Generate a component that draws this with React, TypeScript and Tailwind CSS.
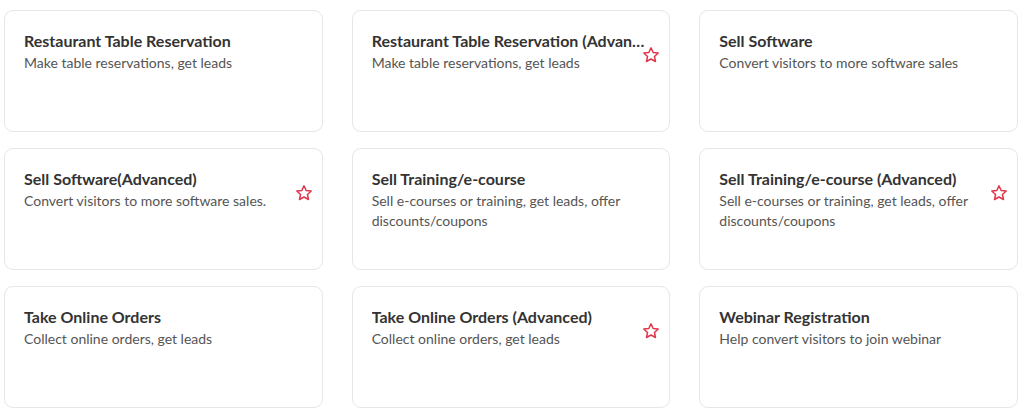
import React from "react";

type Item = { title: string; desc: string; star?: boolean };

const items: Item[] = [
  { title: "Restaurant Table Reservation", desc: "Make table reservations, get leads" },
  { title: "Restaurant Table Reservation (Advanced)", desc: "Make table reservations, get leads", star: true },
  { title: "Sell Software", desc: "Convert visitors to more software sales" },
  { title: "Sell Software(Advanced)", desc: "Convert visitors to more software sales.", star: true },
  { title: "Sell Training/e-course", desc: "Sell e-courses or training, get leads, offer discounts/coupons" },
  { title: "Sell Training/e-course (Advanced)", desc: "Sell e-courses or training, get leads, offer discounts/coupons", star: true },
  { title: "Take Online Orders", desc: "Collect online orders, get leads" },
  { title: "Take Online Orders (Advanced)", desc: "Collect online orders, get leads", star: true },
  { title: "Webinar Registration", desc: "Help convert visitors to join webinar" },
];

function StarIcon() {
  return (
    <svg width="18" height="18" viewBox="0 0 24 24" fill="none" stroke="#e0364a" strokeWidth="2" strokeLinejoin="round">
      <polygon points="12,2.5 14.9,8.7 21.6,9.4 16.6,14 18,20.7 12,17.3 6,20.7 7.4,14 2.4,9.4 9.1,8.7" />
    </svg>
  );
}

export default function App() {
  return (
    <div className="w-[1024px] h-[415px] bg-white pt-[10px] pl-[4px]" style={{ fontFamily: 'Lato, "Open Sans", sans-serif' }}>
      <div className="grid w-[1014px] grid-cols-3 gap-x-[29px] gap-y-[16px]">
        {items.map((it, i) => (
          <div key={i} className="relative h-[122px] rounded-[9px] border border-[#e6e6e6] bg-white pl-[19px] pr-[22px] pt-[19px]">
            <div className="truncate text-[16px] font-bold leading-[22px] text-[#333333]">{it.title}</div>
            <div className="mt-[1px] text-[14px] leading-[20px] text-[#555555]">{it.desc}</div>
            {it.star && (
              <div className="absolute right-[9px] top-[35px]">
                <StarIcon />
              </div>
            )}
          </div>
        ))}
      </div>
    </div>
  );
}
